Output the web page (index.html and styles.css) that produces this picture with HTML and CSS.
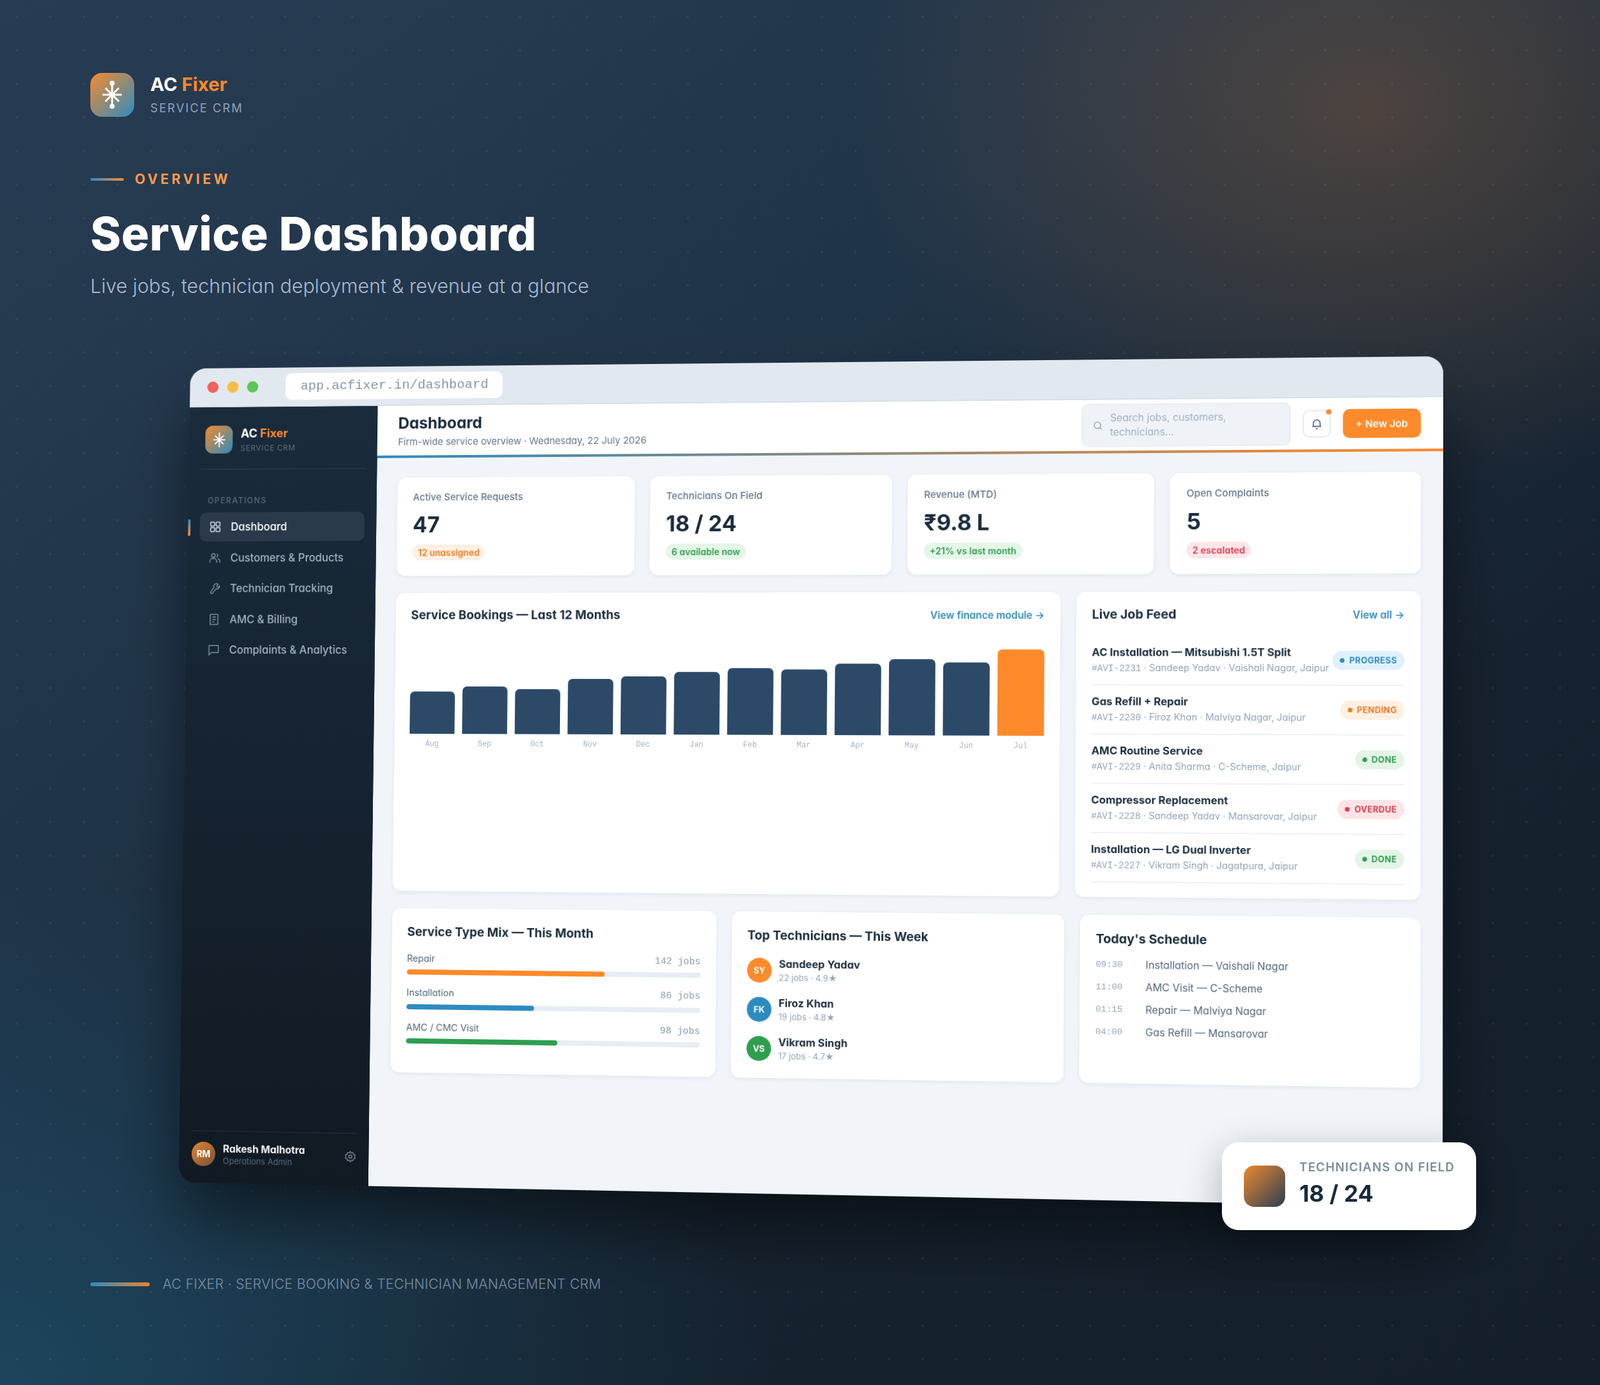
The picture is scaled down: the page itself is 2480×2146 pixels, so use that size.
FILE: index.html
```html
<!DOCTYPE html>
<html lang="en">
<head>
  <meta charset="UTF-8" />
  <meta name="viewport" content="width=device-width, initial-scale=1" />
  <title>AC Fixer - Service Dashboard</title>
  <link rel="stylesheet" href="styles.css">
</head>
<body>
  <header class="hero">
    <div class="brand">
      <span class="brand-icon">
        <svg viewBox="0 0 24 24" class="flake"><path d="M12 3v18M4.5 12h15M6.7 6.7l10.6 10.6M17.3 6.7 6.7 17.3"/><circle cx="12" cy="3" r="1.2"/><circle cx="12" cy="21" r="1.2"/></svg>
      </span>
      <div>
        <div class="brand-name">AC <span>Fixer</span></div>
        <div class="brand-sub">SERVICE CRM</div>
      </div>
    </div>
    <div class="eyebrow"><i></i>OVERVIEW</div>
    <h1>Service Dashboard</h1>
    <p class="lead">Live jobs, technician deployment &amp; revenue at a glance</p>
  </header>

  <div class="window">
    <div class="titlebar">
      <span class="dot red"></span>
      <span class="dot amber"></span>
      <span class="dot green"></span>
      <span class="url">app.acfixer.in/dashboard</span>
    </div>
    <div class="app">
      <aside class="sidebar">
        <div class="side-brand">
          <span class="side-icon">
            <svg viewBox="0 0 24 24" class="flake"><path d="M12 3v18M4.5 12h15M6.7 6.7l10.6 10.6M17.3 6.7 6.7 17.3"/></svg>
          </span>
          <div>
            <div class="side-name">AC <span>Fixer</span></div>
            <div class="side-sub">SERVICE CRM</div>
          </div>
        </div>
        <div class="side-label">OPERATIONS</div>
        <nav class="nav">
          <a class="nav-item active">
            <svg viewBox="0 0 24 24"><rect x="3" y="3" width="7.5" height="7.5" rx="1.5"/><rect x="13.5" y="3" width="7.5" height="7.5" rx="1.5"/><rect x="3" y="13.5" width="7.5" height="7.5" rx="1.5"/><rect x="13.5" y="13.5" width="7.5" height="7.5" rx="1.5"/></svg>
            Dashboard
          </a>
          <a class="nav-item">
            <svg viewBox="0 0 24 24"><circle cx="9" cy="7.5" r="3.5"/><path d="M2.5 21v-2.5A5.5 5.5 0 0 1 8 13h2a5.5 5.5 0 0 1 5.5 5.5V21"/><path d="M15.5 4.3a3.5 3.5 0 0 1 0 6.4M18 13.5a5.5 5.5 0 0 1 3.5 5V21"/></svg>
            Customers &amp; Products
          </a>
          <a class="nav-item">
            <svg viewBox="0 0 24 24"><path d="M14 3.500a4.500 4.500 0 0 1 5 1l-2.500 3 1 2 2.200.300 1.800-2.300a5 5 0 0 1-6.500 5.500l-6.500 8a2.200 2.200 0 0 1-3.500-2.700l6-8.300A5 5 0 0 1 14 3.500Z"/></svg>
            Technician Tracking
          </a>
          <a class="nav-item">
            <svg viewBox="0 0 24 24"><path d="M6 2.500h12a1.500 1.500 0 0 1 1.500 1.500v17.500H4.500V4A1.500 1.500 0 0 1 6 2.500Z"/><path d="M8.500 7.500h7M8.500 12h7M8.500 16.500h4"/></svg>
            AMC &amp; Billing
          </a>
          <a class="nav-item">
            <svg viewBox="0 0 24 24"><path d="M3 4h18v13H8l-5 4.500Z"/></svg>
            Complaints &amp; Analytics
          </a>
        </nav>
        <div class="side-user">
          <span class="user-avatar">RM</span>
          <div class="user-text">
            <div class="user-name">Rakesh Malhotra</div>
            <div class="user-role">Operations Admin</div>
          </div>
          <svg class="gear" viewBox="0 0 24 24"><circle cx="12" cy="12" r="3"/><path d="M12 2.500l2 2.600 3.200-.5 1 3.100 3 1.300-1 3 1 3-3 1.300-1 3.100-3.200-.5-2 2.600-2-2.600-3.200.5-1-3.100-3-1.300 1-3-1-3 3-1.300 1-3.100 3.200.5Z"/></svg>
        </div>
      </aside>

      <main class="main">
        <div class="topbar">
          <div>
            <div class="page-title">Dashboard</div>
            <div class="page-sub">Firm-wide service overview · Wednesday, 22 July 2026</div>
          </div>
          <div class="search">
            <svg viewBox="0 0 24 24"><circle cx="11" cy="11" r="7"/><path d="m20 20-4-4"/></svg>
            <span>Search jobs, customers,<br>technicians...</span>
          </div>
          <div class="bell">
            <svg viewBox="0 0 24 24"><path d="M6 17V11a6 6 0 0 1 12 0v6M4 17h16M10 21h4"/></svg>
          </div>
          <button class="new-job">+ New Job</button>
        </div>
        <div class="topbar-rule"></div>

        <div class="content">
          <section class="kpis">
            <div class="card kpi">
              <div class="kpi-label">Active Service Requests</div>
              <div class="kpi-value">47</div>
              <span class="pill orange">12 unassigned</span>
            </div>
            <div class="card kpi">
              <div class="kpi-label">Technicians On Field</div>
              <div class="kpi-value">18 / 24</div>
              <span class="pill green">6 available now</span>
            </div>
            <div class="card kpi">
              <div class="kpi-label">Revenue (MTD)</div>
              <div class="kpi-value">₹9.8 L</div>
              <span class="pill green">+21% vs last month</span>
            </div>
            <div class="card kpi">
              <div class="kpi-label">Open Complaints</div>
              <div class="kpi-value">5</div>
              <span class="pill red">2 escalated</span>
            </div>
          </section>

          <section class="mid-row">
            <div class="card chart-card">
              <div class="card-head">
                <h2>Service Bookings — Last 12 Months</h2>
                <a class="more">View finance module →</a>
              </div>
              <div class="bars">
                <div class="bar-col"><div class="bar" style="height:66px"></div><span>Aug</span></div>
                <div class="bar-col"><div class="bar" style="height:74px"></div><span>Sep</span></div>
                <div class="bar-col"><div class="bar" style="height:70px"></div><span>Oct</span></div>
                <div class="bar-col"><div class="bar" style="height:86px"></div><span>Nov</span></div>
                <div class="bar-col"><div class="bar" style="height:90px"></div><span>Dec</span></div>
                <div class="bar-col"><div class="bar" style="height:97px"></div><span>Jan</span></div>
                <div class="bar-col"><div class="bar" style="height:103px"></div><span>Feb</span></div>
                <div class="bar-col"><div class="bar" style="height:101px"></div><span>Mar</span></div>
                <div class="bar-col"><div class="bar" style="height:110px"></div><span>Apr</span></div>
                <div class="bar-col"><div class="bar" style="height:117px"></div><span>May</span></div>
                <div class="bar-col"><div class="bar" style="height:112px"></div><span>Jun</span></div>
                <div class="bar-col"><div class="bar current" style="height:132px"></div><span>Jul</span></div>
              </div>
            </div>

            <div class="card feed-card">
              <div class="card-head">
                <h2>Live Job Feed</h2>
                <a class="more">View all →</a>
              </div>
              <div class="job">
                <div class="job-text">
                  <div class="job-title">AC Installation — Mitsubishi 1.5T Split</div>
                  <div class="job-sub"><code>#AVI-2231</code> · Sandeep Yadav · Vaishali Nagar, Jaipur</div>
                </div>
                <span class="badge progress"><i></i>PROGRESS</span>
              </div>
              <div class="job">
                <div class="job-text">
                  <div class="job-title">Gas Refill + Repair</div>
                  <div class="job-sub"><code>#AVI-2230</code> · Firoz Khan · Malviya Nagar, Jaipur</div>
                </div>
                <span class="badge pending"><i></i>PENDING</span>
              </div>
              <div class="job">
                <div class="job-text">
                  <div class="job-title">AMC Routine Service</div>
                  <div class="job-sub"><code>#AVI-2229</code> · Anita Sharma · C-Scheme, Jaipur</div>
                </div>
                <span class="badge done"><i></i>DONE</span>
              </div>
              <div class="job">
                <div class="job-text">
                  <div class="job-title">Compressor Replacement</div>
                  <div class="job-sub"><code>#AVI-2228</code> · Sandeep Yadav · Mansarovar, Jaipur</div>
                </div>
                <span class="badge overdue"><i></i>OVERDUE</span>
              </div>
              <div class="job">
                <div class="job-text">
                  <div class="job-title">Installation — LG Dual Inverter</div>
                  <div class="job-sub"><code>#AVI-2227</code> · Vikram Singh · Jagatpura, Jaipur</div>
                </div>
                <span class="badge done"><i></i>DONE</span>
              </div>
            </div>
          </section>

          <section class="low-row">
            <div class="card low-card">
              <h2>Service Type Mix — This Month</h2>
              <div class="mix">
                <div class="mix-head"><span>Repair</span><code>142 jobs</code></div>
                <div class="track"><div class="fill f-orange" style="width:67.6%"></div></div>
              </div>
              <div class="mix">
                <div class="mix-head"><span>Installation</span><code>86 jobs</code></div>
                <div class="track"><div class="fill f-blue" style="width:43.7%"></div></div>
              </div>
              <div class="mix">
                <div class="mix-head"><span>AMC / CMC Visit</span><code>98 jobs</code></div>
                <div class="track"><div class="fill f-green" style="width:51.7%"></div></div>
              </div>
            </div>

            <div class="card low-card">
              <h2>Top Technicians — This Week</h2>
              <div class="tech">
                <span class="tech-avatar f-orange">SY</span>
                <div><div class="tech-name">Sandeep Yadav</div><div class="tech-sub">22 jobs · 4.9★</div></div>
              </div>
              <div class="tech">
                <span class="tech-avatar f-blue">FK</span>
                <div><div class="tech-name">Firoz Khan</div><div class="tech-sub">19 jobs · 4.8★</div></div>
              </div>
              <div class="tech">
                <span class="tech-avatar f-green">VS</span>
                <div><div class="tech-name">Vikram Singh</div><div class="tech-sub">17 jobs · 4.7★</div></div>
              </div>
            </div>

            <div class="card low-card">
              <h2>Today's Schedule</h2>
              <div class="slots">
                <div class="slot"><code>09:30</code><span>Installation — Vaishali Nagar</span></div>
                <div class="slot"><code>11:00</code><span>AMC Visit — C-Scheme</span></div>
                <div class="slot"><code>01:15</code><span>Repair — Malviya Nagar</span></div>
                <div class="slot"><code>04:00</code><span>Gas Refill — Mansarovar</span></div>
              </div>
            </div>
          </section>
        </div>
      </main>
    </div>
  </div>

  <div class="float-card">
    <span class="float-square"></span>
    <div class="float-text">
      <div class="float-label">TECHNICIANS ON FIELD</div>
      <div class="float-value">18 / 24</div>
    </div>
  </div>

  <footer class="foot"><i></i>AC FIXER · SERVICE BOOKING &amp; TECHNICIAN MANAGEMENT CRM</footer>
</body>
</html>
```

FILE: styles.css
```css
* {
  box-sizing: border-box;
}

html, body {
  margin: 0;
  padding: 0;
}

body {
  width: 2480px;
  height: 2146px;
  overflow: hidden;
  position: relative;
  display: flex;
  flex-direction: column;
  padding: 113px 140px 141px;
  font-family: Inter, 'Noto Sans', sans-serif;
  font-feature-settings: "cv11";
  color: #1a2b3c;
  background:
    radial-gradient(circle at 26px 26px, rgba(255, 255, 255, 0.05) 1.6px, transparent 2.2px) 0 0 / 52px 52px,
    radial-gradient(ellipse 800px 600px at 2120px 170px, rgba(226, 128, 50, 0.24), transparent),
    radial-gradient(ellipse 1200px 800px at 0 2146px, rgba(32, 96, 128, 0.5), transparent),
    linear-gradient(145deg, #283c53 0%, #203449 35%, #16222f 68%, #141f2b 100%);
}

code {
  font-family: 'Liberation Mono', monospace;
}

/* hero */
.brand {
  display: flex;
  align-items: center;
  gap: 25px;
}

.brand-icon {
  width: 68px;
  height: 68px;
  border-radius: 18px;
  background: linear-gradient(135deg, #f68b2c, #2e8bc0);
  display: flex;
  align-items: center;
  justify-content: center;
}

.flake {
  fill: #fff;
  stroke: #fff;
  stroke-width: 1.5;
  width: 70%;
  height: 70%;
}

.brand-name {
  font-size: 29px;
  font-weight: 700;
  line-height: 34px;
  color: #fff;
}

.brand-name span, .side-name span {
  color: #ff8a2b;
}

.brand-sub {
  margin-top: 8px;
  font-size: 18px;
  letter-spacing: 2.100px;
  line-height: 24px;
  color: #8fa3b8;
}

.eyebrow {
  margin-top: 82px;
  display: flex;
  align-items: center;
  gap: 17px;
  font-size: 21px;
  font-weight: 700;
  letter-spacing: 4.400px;
  line-height: 30px;
  color: #ff9a4a;
}

.eyebrow i {
  width: 52px;
  height: 4px;
  border-radius: 2px;
  background: linear-gradient(90deg, #2e8bc0, #ff8a2b);
}

h1 {
  margin: 26px 0 0;
  font-size: 72px;
  font-weight: 800;
  letter-spacing: 0.450px;
  line-height: 86px;
  color: #fff;
}

.lead {
  margin: 16px 0 0;
  font-size: 30px;
  font-weight: 300;
  line-height: 44px;
  color: #aabbcf;
}

.foot {
  margin-top: auto;
  display: flex;
  align-items: center;
  gap: 20px;
  font-size: 21px;
  font-weight: 300;
  letter-spacing: 0.310px;
  line-height: 30px;
  color: #7c90a6;
}

.foot i {
  width: 92px;
  height: 6px;
  border-radius: 3px;
  background: linear-gradient(90deg, #2e8bc0, #e8842f);
}

/* tilted browser window, corners pinned to the picture */
.window {
  position: absolute;
  left: 0;
  top: 0;
  width: 1940px;
  height: 1280px;
  transform-origin: 0 0;
  transform: matrix3d(0.951454, -0.022026, 0, -0.000022163, -0.015945, 0.972703, 0, -0.0000067968, 0, 0, 1, 0, 295, 571, 0, 1);
  border-radius: 26px;
  overflow: hidden;
  background:
    linear-gradient(180deg, #e2e8ef 62px, transparent 62px),
    linear-gradient(90deg, #16222f 302px, #f1f5fa 302px);
  box-shadow: 0 60px 110px -10px rgba(0, 0, 0, 0.55);
}

.titlebar, .app {
  filter: blur(0.5px);
}

.titlebar {
  height: 62px;
  background: #e2e8ef;
  border-bottom: 2px solid #d6dee6;
  display: flex;
  align-items: center;
  padding-left: 28px;
}

.dot {
  width: 18px;
  height: 18px;
  border-radius: 50%;
  margin-right: 14px;
}

.red { background: #f0625a; }
.amber { background: #f6bd41; }
.green { background: #5fc454; }

.url {
  margin-left: 30px;
  width: 346px;
  height: 42px;
  border-radius: 10px;
  background: #fff;
  padding-left: 24px;
  font-family: 'Liberation Mono', monospace;
  font-size: 20.800px;
  line-height: 42px;
  color: #8694a6;
}

.app {
  display: flex;
  height: 1218px;
}

/* sidebar */
.sidebar {
  width: 302px;
  flex-shrink: 0;
  background: linear-gradient(180deg, #1a2b3c 0%, #111a23 100%);
  display: flex;
  flex-direction: column;
  padding: 29px 19px 26px;
  position: relative;
}

.side-brand {
  display: flex;
  align-items: center;
  gap: 13px;
  padding: 0 0 24px 7px;
  border-bottom: 2px solid rgba(255, 255, 255, 0.06);
}

.side-icon {
  width: 44px;
  height: 44px;
  border-radius: 12px;
  background: linear-gradient(135deg, #f68b2c, #2e8bc0);
  display: flex;
  align-items: center;
  justify-content: center;
}

.side-name {
  font-size: 18.500px;
  font-weight: 700;
  line-height: 22px;
  color: #fff;
}

.side-sub {
  margin-top: 5px;
  font-size: 12px;
  letter-spacing: 0.700px;
  line-height: 16px;
  color: #5d7185;
}

.side-label {
  margin: 40px 0 0 12px;
  font-size: 12.500px;
  font-weight: 600;
  letter-spacing: 1.500px;
  line-height: 18px;
  color: #506478;
}

.nav {
  margin-top: 9px;
  display: flex;
  flex-direction: column;
  gap: 2.600px;
}

.nav-item {
  height: 46px;
  border-radius: 10px;
  display: flex;
  align-items: center;
  gap: 15px;
  padding-left: 15px;
  font-size: 17px;
  font-weight: 500;
  color: #a6b4c2;
  position: relative;
}

.nav-item svg {
  width: 20px;
  height: 20px;
  fill: none;
  stroke: #7e8fa0;
  stroke-width: 1.800;
  flex-shrink: 0;
}

.nav-item.active {
  background: #2a3a4b;
  color: #fff;
}

.nav-item.active svg {
  stroke: #dce4ec;
}

.nav-item.active::before {
  content: "";
  position: absolute;
  left: -19px;
  top: 11px;
  width: 4px;
  height: 26px;
  border-radius: 0 2px 2px 0;
  background: linear-gradient(180deg, #2e8bc0, #ff8a2b);
}

.side-user {
  margin-top: auto;
  border-top: 2px solid rgba(255, 255, 255, 0.05);
  padding-top: 16px;
  display: flex;
  align-items: center;
  gap: 12px;
  margin-left: 1px;
}

.user-avatar {
  width: 38px;
  height: 38px;
  border-radius: 50%;
  flex-shrink: 0;
  background: linear-gradient(135deg, #e8842f, #74513a);
  color: #fff;
  font-size: 14px;
  font-weight: 700;
  line-height: 38px;
  text-align: center;
}

.user-text {
  flex: 1;
}

.user-name {
  font-size: 15.800px;
  font-weight: 700;
  line-height: 20px;
  color: #f2f5f8;
}

.user-role {
  font-size: 13px;
  line-height: 17px;
  color: #566a7e;
}

.gear {
  width: 20px;
  height: 20px;
  fill: none;
  stroke: #708294;
  stroke-width: 1.800;
}

/* main column */
.main {
  flex: 1;
  min-width: 0;
  display: flex;
  flex-direction: column;
}

.topbar {
  height: 78px;
  background: #fff;
  padding: 0 33px;
  display: flex;
  align-items: center;
  gap: 18px;
}

.topbar > div:first-child {
  flex: 1;
}

.page-title {
  font-size: 24.600px;
  font-weight: 700;
  line-height: 32px;
  color: #1a2b3c;
}

.page-sub {
  margin-top: 3px;
  font-size: 14.900px;
  line-height: 22px;
  color: #65758a;
}

.search {
  width: 315px;
  height: 66px;
  border-radius: 10px;
  background: #eff3f8;
  border: 2px solid #e8edf3;
  display: flex;
  align-items: center;
  gap: 10px;
  padding-left: 14px;
  font-size: 15.300px;
  line-height: 22px;
  color: #a2afbf;
}

.search svg {
  width: 17px;
  height: 17px;
  fill: none;
  stroke: #93a1b2;
  stroke-width: 2;
  flex-shrink: 0;
}

.bell {
  width: 42px;
  height: 42px;
  border-radius: 10px;
  background: #fff;
  border: 2px solid #e6ebf1;
  display: flex;
  align-items: center;
  justify-content: center;
  position: relative;
}

.bell svg {
  width: 20px;
  height: 20px;
  fill: none;
  stroke: #54667a;
  stroke-width: 2;
}

.bell::after {
  content: "";
  position: absolute;
  right: -3px;
  top: -3px;
  width: 8px;
  height: 8px;
  border-radius: 50%;
  background: #ff8a2b;
}

.new-job {
  width: 116px;
  height: 44px;
  border: none;
  border-radius: 10px;
  background: #ff8a2b;
  color: #fff;
  font: 600 15px Inter, sans-serif;
}

.topbar-rule {
  height: 4px;
  background: linear-gradient(90deg, #2e8bc0, #ff8a2b);
}

.content {
  flex: 1;
  padding: 31px 33px;
  display: flex;
  flex-direction: column;
  gap: 25px;
}

.card {
  background: #fff;
  border-radius: 14px;
  box-shadow: 0 2px 6px rgba(30, 50, 80, 0.08);
}

/* kpi row */
.kpis {
  display: grid;
  grid-template-columns: repeat(4, 1fr);
  gap: 24px;
}

.kpi {
  height: 154px;
  padding: 21px 25px 0;
}

.kpi-label {
  font-size: 15px;
  font-weight: 500;
  line-height: 20px;
  color: #65758a;
}

.kpi-value {
  margin-top: 11px;
  font-size: 34px;
  font-weight: 700;
  line-height: 44px;
  color: #1a2b3c;
}

.pill {
  display: inline-block;
  margin-top: 9px;
  padding: 0 9px;
  height: 25px;
  border-radius: 13px;
  font-size: 14px;
  font-weight: 600;
  line-height: 25px;
}

.pill.orange { background: #fff0e3; color: #f5791c; }
.pill.green { background: #e5f6e9; color: #2e9e4f; }
.pill.red { background: #fde6e8; color: #e5384f; }

/* chart + feed */
.mid-row {
  display: grid;
  grid-template-columns: 2fr 1fr;
  gap: 24px;
  height: 465px;
  margin-top: 2px;
}

.card-head {
  display: flex;
  justify-content: space-between;
  align-items: center;
}

h2 {
  margin: 0;
  font-size: 19px;
  font-weight: 700;
  line-height: 26px;
  color: #1a2b3c;
}

.more {
  font-size: 15.300px;
  font-weight: 600;
  color: #2e8bc0;
}

.chart-card {
  padding: 22px 24px;
}

.bars {
  display: grid;
  grid-template-columns: repeat(12, 1fr);
  gap: 12px;
  align-items: end;
  height: 188px;
  margin-top: 7.500px;
}

.bar-col {
  text-align: center;
}

.bar-col span {
  display: block;
  margin-top: 8px;
  font-family: 'Liberation Mono', monospace;
  font-size: 12px;
  line-height: 16px;
  color: #a7b3c2;
}

.bar {
  background: #2c4a68;
  border-radius: 7px 7px 0 0;
}

.bar.current {
  background: #ff8a2b;
}

.feed-card {
  padding: 22px 24px;
}

.job {
  height: 75px;
  border-bottom: 2px solid #eef2f6;
  display: flex;
  align-items: center;
  justify-content: space-between;
}

.feed-card .card-head {
  margin-bottom: 20px;
}

.job-title {
  font-size: 16.200px;
  font-weight: 700;
  line-height: 22px;
  white-space: nowrap;
  color: #1a2b3c;
}

.job-sub {
  margin-top: 3px;
  font-size: 14.300px;
  line-height: 20px;
  white-space: nowrap;
  color: #94a3b5;
}

.job-sub code {
  font-size: 13.800px;
}

.badge {
  flex-shrink: 0;
  height: 29px;
  padding: 0 11px;
  border-radius: 15px;
  display: flex;
  align-items: center;
  gap: 7px;
  font-size: 12.500px;
  font-weight: 700;
  letter-spacing: 0.400px;
}

.badge i {
  width: 7px;
  height: 7px;
  border-radius: 50%;
  background: currentColor;
}

.badge.progress { background: #e1f1fb; color: #2e8bc0; }
.badge.pending { background: #fff0e3; color: #f5791c; }
.badge.done { background: #e4f5e8; color: #2e9e4f; }
.badge.overdue { background: #fde4e7; color: #e5384f; }

/* bottom row */
.low-row {
  display: grid;
  grid-template-columns: repeat(3, 1fr);
  grid-template-rows: 255px;
  gap: 24px;
  margin-top: 1.500px;
}

.low-card {
  padding: 24px 24px 0;
}

.mix {
  margin-top: 17px;
}

.mix-head {
  display: flex;
  justify-content: space-between;
  font-size: 14.500px;
  line-height: 22px;
  color: #54667a;
}

.mix-head code {
  font-size: 14.800px;
  color: #8b99aa;
}

.mix:first-of-type {
  margin-top: 17px;
}

.track {
  height: 8px;
  margin-top: 6.500px;
  border-radius: 4px;
  background: #e8edf3;
  overflow: hidden;
}

.fill {
  height: 100%;
  border-radius: 4px;
}

.f-orange { background: #ff8a2b; }
.f-blue { background: #2e8bc0; }
.f-green { background: #2e9e4f; }

.tech {
  display: flex;
  align-items: center;
  gap: 11px;
  height: 60px;
}

.tech:first-of-type {
  margin-top: 10px;
}

.tech-avatar {
  width: 38px;
  height: 38px;
  border-radius: 50%;
  color: #fff;
  font-size: 13px;
  font-weight: 700;
  line-height: 38px;
  text-align: center;
}

.tech-name {
  font-size: 16.200px;
  font-weight: 700;
  line-height: 22px;
  color: #1a2b3c;
}

.tech-sub {
  font-size: 13px;
  line-height: 20px;
  color: #94a3b5;
}

.slots {
  margin-top: 9px;
}

.slot {
  display: flex;
  align-items: center;
  height: 34px;
  font-size: 15.600px;
  color: #54667a;
}

.slot code {
  width: 75px;
  font-size: 13.500px;
  color: #94a3b5;
}

/* floating stat */
.float-card {
  position: absolute;
  left: 1894px;
  top: 1770px;
  width: 394px;
  height: 136px;
  padding-left: 34px;
  border-radius: 26px;
  background: #fff;
  display: flex;
  align-items: center;
  gap: 22px;
  box-shadow: 0 16px 60px rgba(0, 0, 0, 0.28);
}

.float-square {
  width: 64px;
  height: 64px;
  border-radius: 16px;
  background: linear-gradient(135deg, #ec8a2d, #2c3e55);
}

.float-text {
  margin-bottom: 9px;
}

.float-label {
  font-size: 18.500px;
  font-weight: 600;
  letter-spacing: 1.200px;
  line-height: 26px;
  color: #7a8ca0;
}

.float-value {
  margin-top: 6px;
  font-size: 35.500px;
  font-weight: 700;
  line-height: 46px;
  color: #1a2b3c;
}
```
